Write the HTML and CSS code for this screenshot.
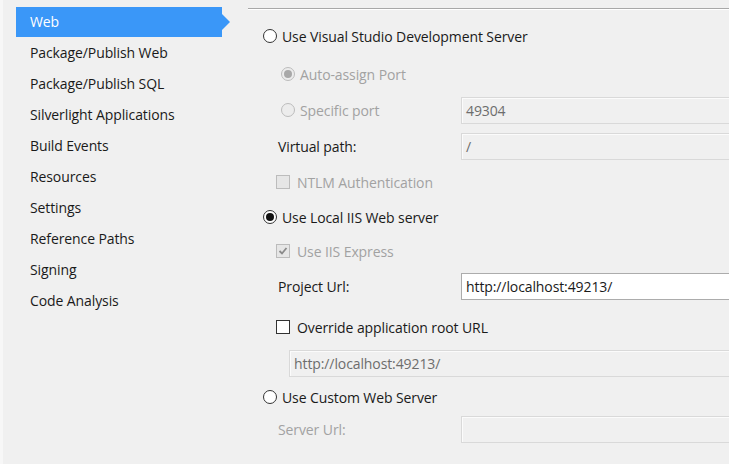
FILE: index.html
```html
<!DOCTYPE html>
<html>
<head>
<meta charset="utf-8">
<link rel="stylesheet" href="styles.css">
</head>
<body>
<div class="page">
  <nav class="sidebar">
    <div class="nav-item selected">Web</div>
    <div class="nav-item">Package/Publish Web</div>
    <div class="nav-item">Package/Publish SQL</div>
    <div class="nav-item">Silverlight Applications</div>
    <div class="nav-item">Build Events</div>
    <div class="nav-item">Resources</div>
    <div class="nav-item">Settings</div>
    <div class="nav-item">Reference Paths</div>
    <div class="nav-item">Signing</div>
    <div class="nav-item">Code Analysis</div>
  </nav>
  <main class="panel">
    <div class="row r1 lvl0">
      <span class="radio"></span><span class="text">Use Visual Studio Development Server</span>
    </div>
    <div class="row r2 lvl1 disabled">
      <span class="radio on"></span><span class="text">Auto-assign Port</span>
    </div>
    <div class="row r3 lvl1 disabled">
      <span class="cell-radio"><span class="radio"></span><span class="text">Specific port</span></span>
      <span class="field dis">49304</span>
    </div>
    <div class="row r4 lvl2">
      <span class="cell-label">Virtual path:</span>
      <span class="field dis">/</span>
    </div>
    <div class="row r5 lvlc disabled">
      <span class="check"></span><span class="text">NTLM Authentication</span>
    </div>
    <div class="row r6 lvl0">
      <span class="radio on"></span><span class="text">Use Local IIS Web server</span>
    </div>
    <div class="row r7 lvlc disabled">
      <span class="check on"><svg viewBox="0 0 12 12" width="12" height="12"><path d="M2.5 6 L5 8.5 L9.5 3" fill="none" stroke="#8a8a8a" stroke-width="1.8"/></svg></span><span class="text">Use IIS Express</span>
    </div>
    <div class="row r8 lvl2">
      <span class="cell-label">Project Url:</span>
      <span class="field">http://localhost:49213/</span>
    </div>
    <div class="row r9 lvlc">
      <span class="check"></span><span class="text">Override application root URL</span>
    </div>
    <div class="row r10 lvlf">
      <span class="field dis">http://localhost:49213/</span>
    </div>
    <div class="row r11 lvl0">
      <span class="radio"></span><span class="text">Use Custom Web Server</span>
    </div>
    <div class="row r12 lvl2 disabled">
      <span class="cell-label">Server Url:</span>
      <span class="field dis"></span>
    </div>
  </main>
</div>
</body>
</html>
```

FILE: styles.css
```css
html, body {
  margin: 0;
  padding: 0;
  background: #f0f0f0;
  overflow: hidden;
}
body {
  width: 729px;
  height: 464px;
  font-family: "Open Sans", "Noto Sans", sans-serif;
  font-size: 14px;
  color: #1a1a1a;
}
.page {
  display: flex;
  height: 464px;
  border-left: 3px solid #f7f7f7;
  box-sizing: border-box;
}
.sidebar {
  width: 245px;
  flex: none;
  padding-top: 7px;
}
.nav-item {
  height: 31px;
  line-height: 30px;
  margin-left: 13px;
  width: 206px;
  padding-left: 14px;
  box-sizing: border-box;
  position: relative;
  white-space: nowrap;
  letter-spacing: -0.1px;
}
.nav-item.selected {
  background: #3a97f8;
  color: #ffffff;
  height: 30px;
  margin-bottom: 1px;
}
.nav-item.selected::after {
  content: "";
  position: absolute;
  right: -8px;
  top: 7px;
  border-left: 8px solid #3a97f8;
  border-top: 8px solid transparent;
  border-bottom: 8px solid transparent;
}
.panel {
  flex: 1;
  margin-top: 8px;
  border-top: 1px solid #a8a8a8;
  box-shadow: inset 0 1px 0 #ffffff;
  padding-top: 13px;
  display: flex;
  flex-direction: column;
  min-width: 0;
}
.row {
  height: 28px;
  display: flex;
  align-items: center;
  white-space: nowrap;
  letter-spacing: -0.1px;
}
.r2 { margin-top: 10px; }
.r3 { margin-top: 8px; }
.r4 { margin-top: 8px; }
.r5 { margin-top: 8px; }
.r6 { margin-top: 7px; }
.r7 { margin-top: 6px; }
.r8 { margin-top: 7px; }
.r9 { margin-top: 13px; }
.r10 { margin-top: 8px; }
.r11 { margin-top: 6px; }
.r12 { margin-top: 4px; }

.lvl0 { padding-left: 15px; }
.lvl1 { padding-left: 33px; }
.lvl2 { padding-left: 30px; }
.lvlc { padding-left: 28px; }
.lvlf { padding-left: 41px; }

.disabled .text, .disabled .cell-label { color: #a2a2a2; }

.text { margin-left: 5px; }
.lvlc .text { margin-left: 7px; }

.cell-radio {
  width: 180px;
  display: flex;
  align-items: center;
  flex: none;
}
.cell-label {
  width: 183px;
  flex: none;
}

.radio {
  width: 12px;
  height: 12px;
  border: 1px solid #333333;
  border-radius: 50%;
  background: #ffffff;
  flex: none;
  display: flex;
  align-items: center;
  justify-content: center;
}
.radio.on::before {
  content: "";
  width: 8px;
  height: 8px;
  border-radius: 50%;
  background: #111111;
}
.disabled .radio {
  border-color: #bcbcbc;
  background: #ececec;
}
.disabled .radio.on::before {
  background: #a8a8a8;
}

.check {
  width: 12px;
  height: 12px;
  border: 1px solid #333333;
  background: #ffffff;
  flex: none;
  display: flex;
  align-items: center;
  justify-content: center;
}
.disabled .check {
  border-color: #bcbcbc;
  background: #e6e6e6;
}

.field {
  flex: 1;
  height: 25px;
  line-height: 25px;
  margin-right: -6px;
  border: 1px solid #acacac;
  background: #ffffff;
  padding-left: 4px;
  color: #1a1a1a;
}
.field.dis {
  border-color: #d9d9d9;
  background: #f0f0f0;
  box-shadow: inset 1px 1px 0 #fbfbfb;
  color: #6d6d6d;
}
```
